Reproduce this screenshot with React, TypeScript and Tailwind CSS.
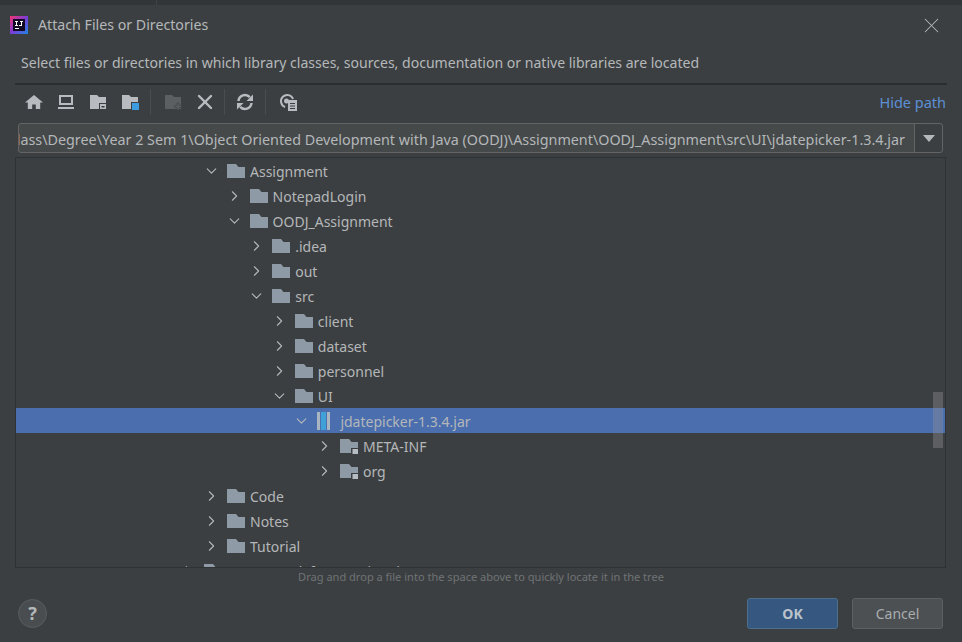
import { ChevronDown, ChevronRight, X } from "lucide-react";

const Sep = ({ className }: { className: string }) => (
  <div className={`w-px h-[26px] bg-[#4a4d4f] shrink-0 ${className}`} />
);

const FolderIcon = ({ badge }: { badge?: boolean }) => (
  <svg width="18" height="16" viewBox="0 0 18 16" className="shrink-0">
    <path d="M0 1h9l2.500 3H18v11H0z" fill="#8e9aa5" />
    {badge && (
      <>
        <rect x="11" y="10" width="7" height="6" fill="#3c3f41" />
        <rect x="12.500" y="11" width="5.500" height="5" fill="#b5bcc2" />
      </>
    )}
  </svg>
);

const ToolBtn = ({ children }: { children: React.ReactNode }) => (
  <div className="w-[32px] h-[22px] flex items-center justify-center shrink-0">{children}</div>
);

type Node = { name: string; level: number; open?: boolean; kind?: "jar" | "pkg" };

const rows: Node[] = [
  { name: "Assignment", level: 0, open: true },
  { name: "NotepadLogin", level: 1 },
  { name: "OODJ_Assignment", level: 1, open: true },
  { name: ".idea", level: 2 },
  { name: "out", level: 2 },
  { name: "src", level: 2, open: true },
  { name: "client", level: 3 },
  { name: "dataset", level: 3 },
  { name: "personnel", level: 3 },
  { name: "UI", level: 3, open: true },
  { name: "jdatepicker-1.3.4.jar", level: 4, open: true, kind: "jar" },
  { name: "META-INF", level: 5, kind: "pkg" },
  { name: "org", level: 5, kind: "pkg" },
  { name: "Code", level: 0 },
  { name: "Notes", level: 0 },
  { name: "Tutorial", level: 0 },
  { name: "Coursework for Exercises in ISE N", level: -1 },
];

const Row = ({ node }: { node: Node }) => {
  const selected = node.kind === "jar";
  return (
    <div
      className={`h-[25px] flex items-center shrink-0 ${selected ? "bg-[#4b6eaf]" : ""}`}
      style={{ paddingLeft: 187 + node.level * 22.6 }}
    >
      <div className="w-[17px] flex items-center justify-center shrink-0">
        {node.open ? (
          <ChevronDown size={18} strokeWidth={1.5} color="#b4b8ba" />
        ) : (
          <ChevronRight size={18} strokeWidth={1.5} color="#b4b8ba" />
        )}
      </div>
      <div className="ml-[7px] w-[18px] flex items-center shrink-0">
        {node.kind === "jar" ? (
          <svg width="13" height="18" viewBox="0 0 13 18">
            <rect x="0" y="0" width="13" height="18" fill="#a9b5c0" />
            <rect x="3" y="0" width="7" height="18" fill="#4b6eaf" />
            <rect x="4" y="0" width="5" height="18" fill="#40a0d8" />
          </svg>
        ) : (
          <FolderIcon badge={node.kind === "pkg"} />
        )}
      </div>
      <span className="ml-[5px] pt-[1px] text-[14px] text-[#b4b7b9] whitespace-nowrap">{node.name}</span>
    </div>
  );
};

export default function App() {
  return (
    <div className="w-[962px] h-[642px] overflow-hidden flex flex-col bg-[#3c3f41] font-['Noto_Sans','Open_Sans',sans-serif]">
      <div className="h-[5px] bg-[#333638] shrink-0">
        <div className="w-[157px] h-full border-r border-[#3f4244]" />
      </div>

      <div className="h-[40px] shrink-0 flex items-center pl-[10px] pr-[18px]">
        <svg width="18" height="18" viewBox="0 0 18 18" className="shrink-0">
          <defs>
            <linearGradient id="ij" x1="0" y1="0" x2="1" y2="1">
              <stop offset="0" stopColor="#f5326f" />
              <stop offset="0.5" stopColor="#7b3cd6" />
              <stop offset="1" stopColor="#1e88e5" />
            </linearGradient>
          </defs>
          <rect width="18" height="18" fill="url(#ij)" />
          <rect x="3" y="3" width="12" height="12" fill="#120a24" />
          <rect x="5" y="5" width="3" height="1" fill="#fff" />
          <rect x="6" y="5" width="1" height="5" fill="#fff" />
          <rect x="5" y="9" width="3" height="1" fill="#fff" />
          <rect x="10" y="5" width="3" height="1" fill="#fff" />
          <rect x="11" y="5" width="1" height="5" fill="#fff" />
          <rect x="9" y="9" width="3" height="1" fill="#fff" />
          <rect x="5" y="12" width="4" height="1" fill="#fff" />
        </svg>
        <span className="ml-[10px] text-[14.2px] text-[#b4b8ba]">Attach Files or Directories</span>
        <X size={25} strokeWidth={1} color="#b4b8ba" className="ml-auto" />
      </div>

      <div className="h-[40px] shrink-0 flex items-center pl-[6px] pb-[3px] text-[14.05px] text-[#b4b8ba] border-b-2 border-[#2b2d2f] mx-[15px]">
        Select files or directories in which library classes, sources, documentation or native libraries are located
      </div>

      <div className="h-[35px] shrink-0 flex items-center pl-[3px] pb-[2px] mx-[15px] mr-[16px]">
        <ToolBtn>
          <svg width="18" height="16" viewBox="0 0 18 16">
            <path d="M9 1 0 8.500h2.800V15h4.400v-4.500h3.600V15h4.400V8.500H18z" fill="#b8bcc0" />
          </svg>
        </ToolBtn>
        <ToolBtn>
          <svg width="18" height="16" viewBox="0 0 18 16">
            <path d="M2 1h14v10H2zM4 3v6h10V3zM1 13h16v2H1z" fill="#b8bcc0" fillRule="evenodd" />
          </svg>
        </ToolBtn>
        <ToolBtn>
          <svg width="18" height="16" viewBox="0 0 18 16">
            <path d="M1 1h7l2 2h7v12H1z" fill="#b8bcc0" />
            <rect x="10" y="9" width="7" height="6" fill="#3c3f41" />
            <rect x="11" y="10" width="6" height="5" fill="#b8bcc0" />
            <rect x="12.500" y="12" width="3" height="1.500" fill="#3c3f41" />
          </svg>
        </ToolBtn>
        <ToolBtn>
          <svg width="18" height="16" viewBox="0 0 18 16">
            <path d="M1 1h7l2 2h7v12H1z" fill="#b8bcc0" />
            <rect x="10" y="8" width="8" height="8" fill="#3c3f41" />
            <rect x="11" y="9" width="7" height="7" fill="#3d9be0" />
          </svg>
        </ToolBtn>
        <Sep className="ml-[4px] mr-[6px]" />
        <ToolBtn>
          <svg width="18" height="16" viewBox="0 0 18 16">
            <path d="M1 1h7l2 2h7v12H1z" fill="#5c5f61" />
            <path d="M13 9h2v2.500h2.500v2H15V16h-2v-2.500h-2.500v-2H13z" fill="#5c5f61" stroke="#3c3f41" strokeWidth="0.6" />
          </svg>
        </ToolBtn>
        <ToolBtn>
          <X size={24} strokeWidth={2.4} color="#b8bcc0" />
        </ToolBtn>
        <Sep className="ml-[3px] mr-[4px]" />
        <ToolBtn>
          <svg width="18" height="18" viewBox="0 0 18 18" fill="none">
            <path d="M2.500 8a6.500 6.500 0 0 1 11.300-3.800" stroke="#b8bcc0" strokeWidth="2.500" />
            <path d="M17 1.500v6.500h-6.500z" fill="#b8bcc0" />
            <path d="M15.500 10a6.500 6.500 0 0 1-11.300 3.800" stroke="#b8bcc0" strokeWidth="2.500" />
            <path d="M1 16.500v-6.500h6.500z" fill="#b8bcc0" />
          </svg>
        </ToolBtn>
        <Sep className="ml-[4px] mr-[6px]" />
        <ToolBtn>
          <svg width="20" height="18" viewBox="0 0 20 18" fill="none">
            <path d="M7 14A6.200 6.200 0 1 1 15 6" stroke="#b8bcc0" strokeWidth="2" />
            <circle cx="8.500" cy="8" r="2.500" fill="#b8bcc0" />
            <rect x="10" y="7" width="9" height="11" fill="#b8bcc0" />
            <path d="M12 10.500h5M12 13h5M12 15.500h5" stroke="#3c3f41" strokeWidth="1" />
          </svg>
        </ToolBtn>
        <span className="ml-auto text-[14.5px] text-[#5c8fd6] pt-[3px]">Hide path</span>
      </div>

      <div className="h-[30px] shrink-0 flex mt-[3px] ml-[18px] mr-[19px] border border-[#646464] bg-[#45494a] rounded-[3px]">
        <div className="flex-1 overflow-hidden flex items-center justify-end pt-[3px] pr-[9px] text-[14.33px] text-[#b4b7b9] whitespace-nowrap">
          C:\Users\Class\Degree\Year 2 Sem 1\Object Oriented Development with Java (OODJ)\Assignment\OODJ_Assignment\src\UI\jdatepicker-1.3.4.jar
        </div>
        <div className="w-[28px] border-l border-[#646464] bg-[#3c3f41] rounded-r-[3px] flex items-center justify-center">
          <svg width="12" height="7" viewBox="0 0 12 7">
            <path d="M0 0h12L6 7z" fill="#b4b8ba" />
          </svg>
        </div>
      </div>

      <div className="relative h-[411px] shrink-0 mt-[4px] ml-[15px] mr-[16px] border border-[#2f3234] overflow-hidden flex flex-col">
        {rows.map((n) => (
          <Row key={n.name} node={n} />
        ))}
        <div className="absolute right-[2px] top-[234px] w-[10px] h-[56px] bg-[#8c8f91]/40" />
      </div>

      <div className="h-[16px] pt-[1px] text-center text-[11.05px] leading-[16px] text-[#6f7375] shrink-0">
        Drag and drop a file into the space above to quickly locate it in the tree
      </div>

      <div className="flex-1 flex items-center pl-[18px] pr-[19px]">
        <div className="w-[29px] h-[29px] rounded-full bg-[#4a4d4f] border border-[#5a5d5f] flex items-center justify-center text-[18px] font-bold text-[#b4b8ba]">
          ?
        </div>
        <button className="ml-auto w-[91px] h-[31px] pt-[1px] rounded-[3px] bg-[#365880] border border-[#4c708c] text-[14px] font-bold text-[#bbc3cb]">
          OK
        </button>
        <button className="ml-[14px] w-[91px] h-[31px] pt-[1px] rounded-[3px] bg-[#4c5052] border border-[#5e6060] text-[14px] text-[#a9adaf]">
          Cancel
        </button>
      </div>
    </div>
  );
}
